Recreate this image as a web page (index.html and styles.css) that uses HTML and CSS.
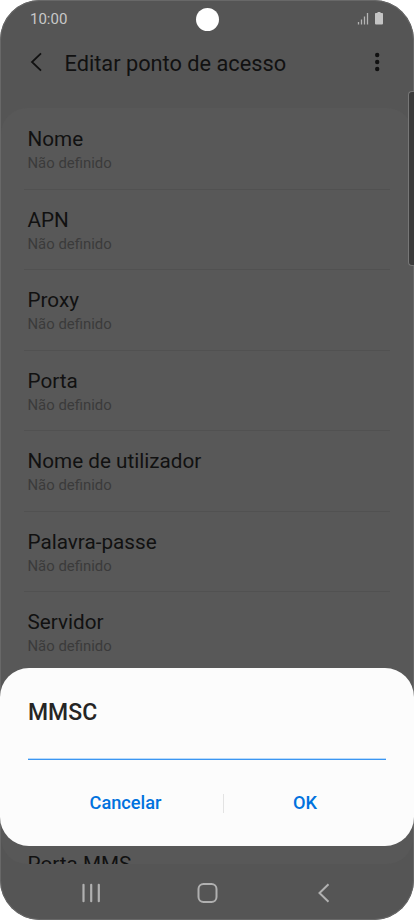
FILE: index.html
```
<!doctype html>

<html lang="pt">
<head>
  <meta charset="utf-8">
  <meta name="viewport" content="width=device-width, initial-scale=1">

  <title>Editar ponto de acesso</title>

  <link rel="stylesheet" href="styles.css">
</head>
<body>
  <div class="phone">
    <div class="status-bar">
      <span class="time">10:00</span>
      <svg class="status-icons" width="28" height="14" viewBox="0 0 28 14">
        <path d="M1.500 10v2.500M4.500 7.500v5M7.500 4.500v8M10.500 1v11.500" stroke="#b4b4b4" stroke-width="1.300"/>
        <path d="M20.500 0h3v1h1.700a.8.8 0 0 1 .8.8V11.500a1 1 0 0 1-1 1h-6a1 1 0 0 1-1-1V1.800a.8.8 0 0 1 .8-.8h1.700z" fill="#c4c4c4"/>
      </svg>
    </div>
    <div class="camera"></div>

    <header>
      <svg class="back" width="14" height="20" viewBox="0 0 14 20">
        <path d="M12 1.300 3 10l9 8.700" fill="none" stroke="#111" stroke-width="1.800"/>
      </svg>
      <h1>Editar ponto de acesso</h1>
      <svg class="more" width="6" height="20" viewBox="0 0 6 20">
        <g fill="#111"><circle cx="3.200" cy="3" r="2.200"/><circle cx="3.200" cy="10" r="2.200"/><circle cx="3.200" cy="17" r="2.200"/></g>
      </svg>
    </header>

    <main>
      <ul>
        <li><h2>Nome</h2><p>Não definido</p></li>
        <li><h2>APN</h2><p>Não definido</p></li>
        <li><h2>Proxy</h2><p>Não definido</p></li>
        <li><h2>Porta</h2><p>Não definido</p></li>
        <li><h2>Nome de utilizador</h2><p>Não definido</p></li>
        <li><h2>Palavra-passe</h2><p>Não definido</p></li>
        <li><h2>Servidor</h2><p>Não definido</p></li>
        <!-- two rows behind the dialog -->
        <li></li>
        <li></li>
        <li><h2>Porta MMS</h2></li>
      </ul>
    </main>

    <nav>
      <svg width="20" height="20" viewBox="0 0 20 20">
        <path d="M2.500 1.800v16.400M10.200 1.800v16.400M17.800 1.800v16.400" stroke="#b0b0b0" stroke-width="2.200" stroke-linecap="round"/>
      </svg>
      <svg width="21" height="20" viewBox="0 0 21 20">
        <rect x="1.500" y="1" width="18" height="18" rx="5" fill="none" stroke="#b0b0b0" stroke-width="2"/>
      </svg>
      <svg width="20" height="20" viewBox="0 0 20 20">
        <path d="M14.500 1.300 5.500 10l9 8.700" fill="none" stroke="#b0b0b0" stroke-width="2"/>
      </svg>
    </nav>

    <div class="edge-handle"></div>

    <div class="dialog">
      <h3>MMSC</h3>
      <div class="field" role="textbox" aria-label="MMSC" contenteditable="true"></div>
      <div class="buttons">
        <button>Cancelar</button>
        <span class="separator"></span>
        <button>OK</button>
      </div>
    </div>
  </div>
</body>
</html>
```

FILE: styles.css
```
* {
  box-sizing: border-box;
}
body {
  background-color: white;
  font-family: Roboto, sans-serif;
  margin: 0;
}
h1, h2, h3, p {
  font-weight: 400;
  margin: 0;
}
.phone {
  background-color: #555;
  border-radius: 40px;
  box-shadow: inset 0 0 0 1px #686868;
  display: flex;
  flex-direction: column;
  height: 920px;
  overflow: hidden;
  padding: 1px;
  position: relative;
  width: 414px;
}
.status-bar {
  align-items: center;
  display: flex;
  height: 36px;
  justify-content: space-between;
  padding: 0 28px 0 29px;
}
.time {
  color: #c8c8c8;
  font-size: 15px;
  line-height: 36px;
}
.camera {
  background-color: white;
  border-radius: 50%;
  height: 23px;
  left: 195.5px;
  position: absolute;
  top: 7.5px;
  width: 23px;
}
header {
  align-items: center;
  display: flex;
  height: 71px;
  padding: 0 33px 21px 27.5px;
}
h1 {
  color: #111;
  flex-grow: 1;
  font-size: 21.75px;
  line-height: 26px;
  margin-left: 22px;
  padding-top: 3px;
}
main {
  background-color: #585858;
  border-radius: 26px;
  height: 756px;
  overflow: hidden;
  padding: 1px 23px 0;
}
ul {
  list-style-type: none;
  margin: 0;
  padding: 0;
}
li {
  border-bottom: 1px solid #515151;
  height: 80.5px;
  padding: 17px 3.5px 0;
}
h2 {
  color: #111;
  font-size: 20.7px;
  line-height: 26px;
}
li p {
  color: #3b3b3b;
  font-size: 14.9px;
  line-height: 22px;
}
nav {
  align-items: center;
  display: flex;
  flex-grow: 1;
  gap: 96px;
  justify-content: center;
  padding-top: 2px;
}
.edge-handle {
  background-color: #3b3b3b;
  border: 1px solid #777;
  border-radius: 4px 0 0 4px;
  border-right: 0;
  height: 175px;
  position: absolute;
  right: 0;
  top: 91px;
  width: 6px;
}
.dialog {
  background-color: #fcfcfc;
  border-radius: 29px;
  height: 178px;
  left: 0;
  padding: 31px 28px 0;
  position: absolute;
  top: 668px;
  width: 414px;
}
h3 {
  color: #252525;
  font-size: 23px;
  font-weight: 500;
  line-height: 28px;
}
.field {
  border-bottom: 1px solid #3b96f2;
  box-shadow: inset 0 -1px #b8dafa;
  font-size: 20px;
  height: 33px;
  outline: none;
}
.buttons {
  align-items: center;
  display: flex;
  height: 86px;
}
button {
  background: none;
  border: 0;
  color: #0072de;
  font-family: inherit;
  font-size: 18.2px;
  font-weight: 500;
  line-height: 22px;
  padding: 0;
  width: 195px;
}
button:last-child {
  width: 162px;
}
.separator {
  background-color: #e3e3e3;
  height: 19px;
  width: 1px;
}
```
